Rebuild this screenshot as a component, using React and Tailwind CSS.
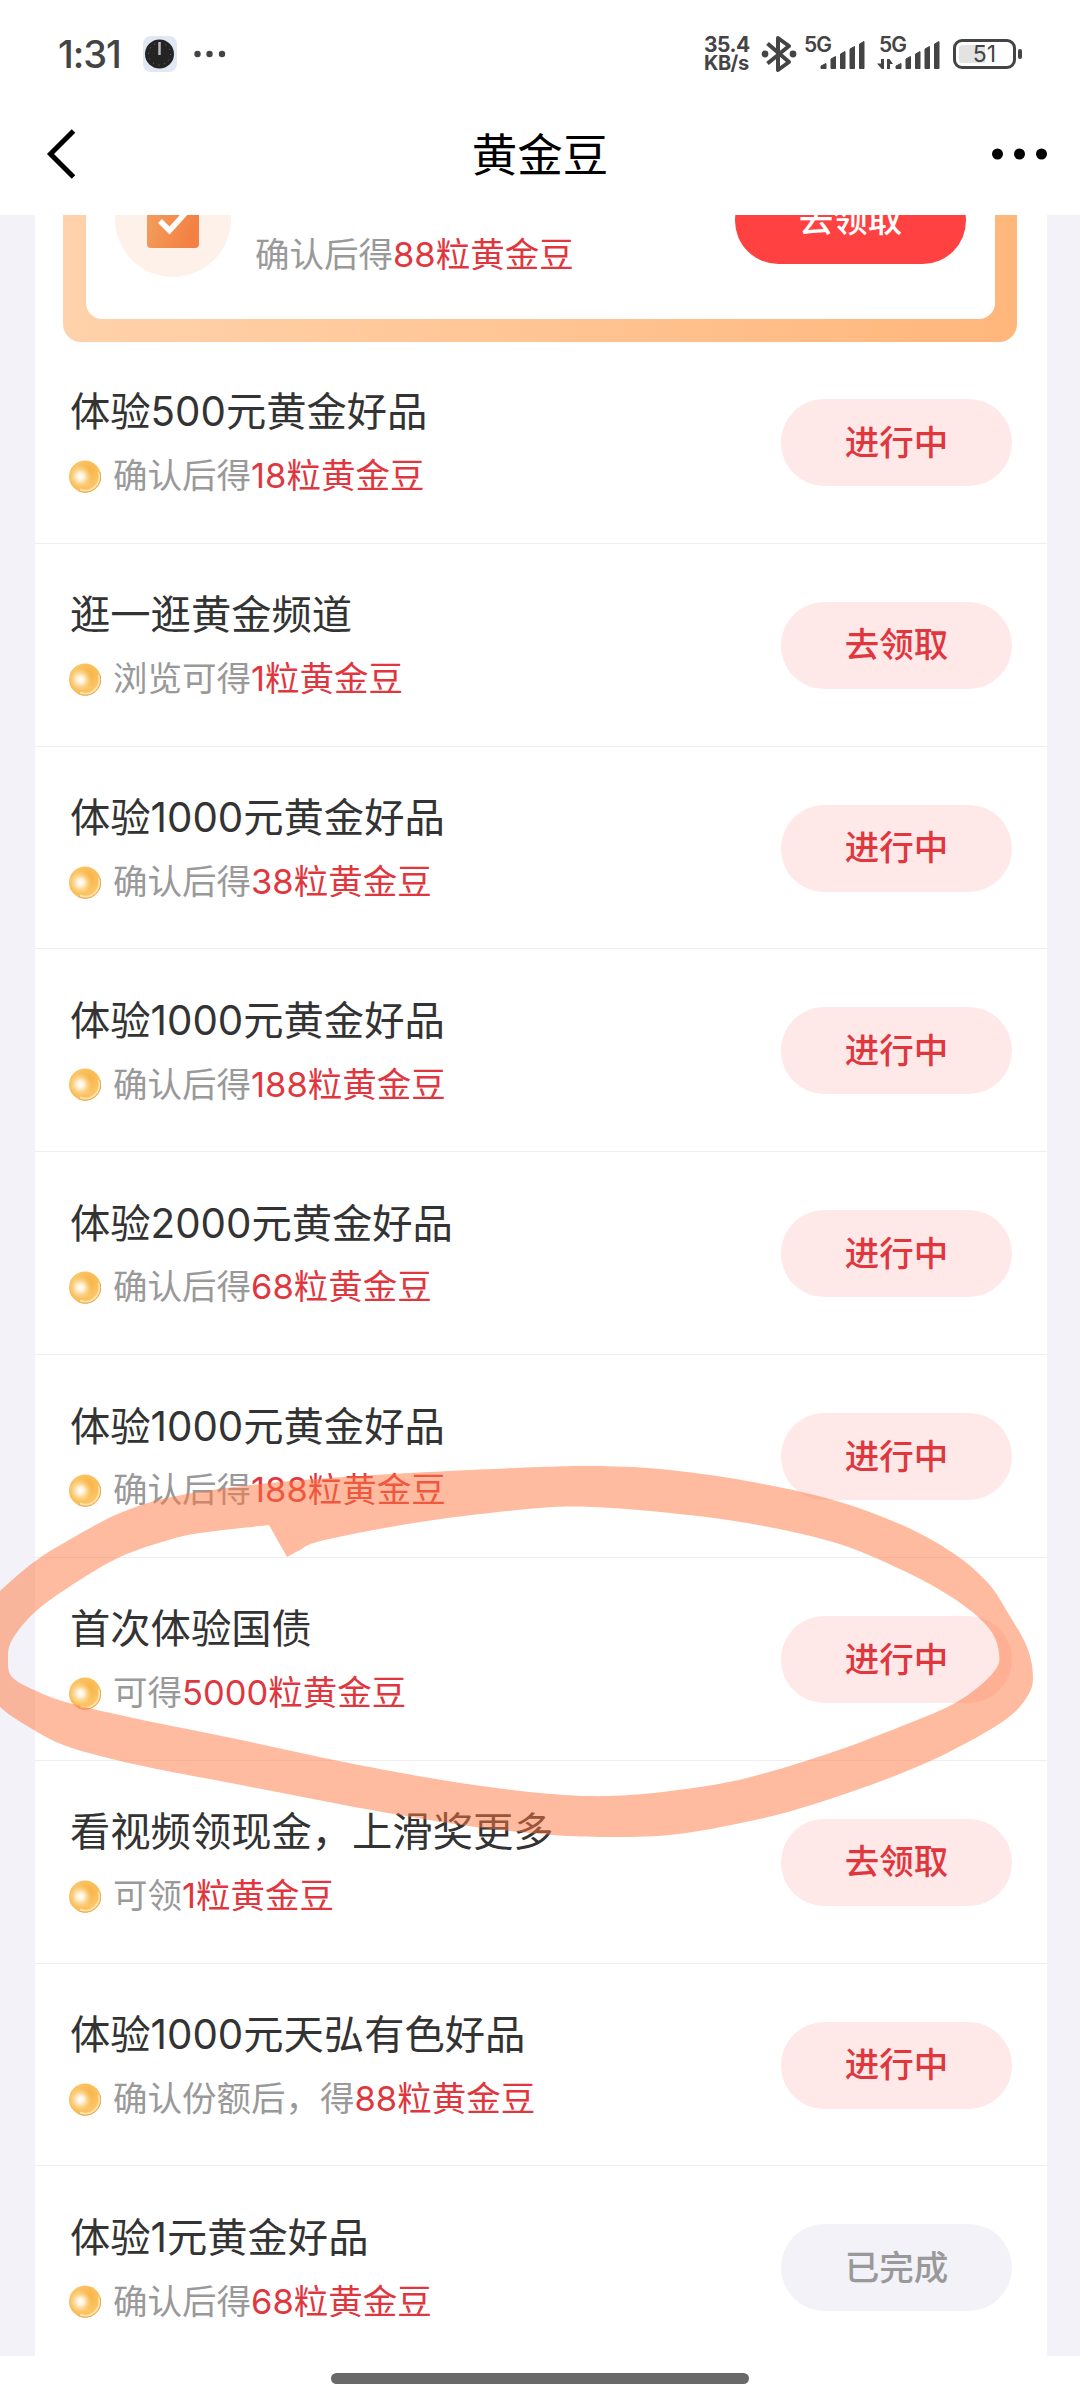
import React from 'react';

const tasks = [
  { title: '体验500元黄金好品', hint: '确认后得', reward: '18粒黄金豆', status: '进行中' },
  { title: '逛一逛黄金频道', hint: '浏览可得', reward: '1粒黄金豆', status: '去领取' },
  { title: '体验1000元黄金好品', hint: '确认后得', reward: '38粒黄金豆', status: '进行中' },
  { title: '体验1000元黄金好品', hint: '确认后得', reward: '188粒黄金豆', status: '进行中' },
  { title: '体验2000元黄金好品', hint: '确认后得', reward: '68粒黄金豆', status: '进行中' },
  { title: '体验1000元黄金好品', hint: '确认后得', reward: '188粒黄金豆', status: '进行中' },
  { title: '首次体验国债', hint: '可得', reward: '5000粒黄金豆', status: '进行中' },
  { title: '看视频领现金，上滑奖更多', hint: '可领', reward: '1粒黄金豆', status: '去领取' },
  { title: '体验1000元天弘有色好品', hint: '确认份额后，得', reward: '88粒黄金豆', status: '进行中' },
  { title: '体验1元黄金好品', hint: '确认后得', reward: '68粒黄金豆', status: '已完成' },
];

// marker stroke around the highlighted task, outer edge then inner edge
const outerEdge = [
  [-20, 1612], [0, 1591], [34, 1562], [69, 1540], [120, 1513], [172, 1497], [251, 1485],
  [344, 1477], [448, 1471], [540, 1467], [592, 1466], [660, 1469], [747, 1481], [833, 1500],
  [902, 1525], [953, 1553], [988, 1583], [1008, 1613], [1027, 1647], [1033, 1677],
  [1027, 1697], [1005, 1720], [953, 1750], [902, 1773], [833, 1798], [764, 1818],
  [678, 1834], [609, 1837], [540, 1834], [448, 1823], [344, 1805], [241, 1785],
  [138, 1765], [69, 1747], [34, 1730], [0, 1707], [-20, 1680],
];

const innerEdge = [
  [287, 1557], [300, 1550], [317, 1542], [379, 1529], [448, 1518], [540, 1508], [592, 1507],
  [660, 1512], [747, 1523], [833, 1542], [902, 1570], [953, 1598], [988, 1627], [999, 1653],
  [993, 1673], [957, 1702], [902, 1726], [833, 1752], [747, 1778], [678, 1790],
  [609, 1796], [540, 1793], [448, 1781], [344, 1762], [241, 1740], [138, 1719],
  [69, 1703], [34, 1690], [12, 1677], [8, 1660], [12, 1640], [34, 1613], [69, 1587],
  [120, 1557], [172, 1539], [207, 1532], [269, 1525],
];

function smoothPath(points) {
  let d = `M${points[0][0]} ${points[0][1]}`;
  for (let i = 0; i < points.length - 1; i++) {
    const a = points[i - 1] || points[i];
    const b = points[i];
    const c = points[i + 1];
    const e = points[i + 2] || c;
    d += ` C${b[0] + (c[0] - a[0]) / 6} ${b[1] + (c[1] - a[1]) / 6}`;
    d += ` ${c[0] - (e[0] - b[0]) / 6} ${c[1] - (e[1] - b[1]) / 6}`;
    d += ` ${c[0]} ${c[1]}`;
  }
  return d + ' Z';
}

function Signal({ data }) {
  return (
    <svg
      className="mb-[2px] overflow-visible"
      width="62"
      height="34"
      viewBox="0 0 62 34"
      fill="#444444"
      stroke="#444444"
      strokeLinejoin="round"
    >
      <text x="0" y="16" fontSize="21" fontWeight="600" textLength="28" stroke="none">
        5G
      </text>
      <path d="M17 32.500 v-2.500 l5 -2.500 v5 Z" />
      <path d="M27 32.500 v-9.500 l4.500 -2.500 v12 Z" />
      <path d="M36.500 32.500 v-14.500 l4.500 -2.500 v17 Z" />
      <path d="M46 32.500 v-19.500 l4.500 -2.500 v22 Z" />
      <path d="M55.500 32.500 v-24.500 l4.500 -2.500 v27 Z" />
      {data && (
        <path
          stroke="none"
          d="M5 23 v10 h-2.200 l-4.800 -5.500 h4 v-4.500 Z M8 33 v-10 h2.500 l3.500 5 h-3 v5 Z"
        />
      )}
    </svg>
  );
}

function StatusBar() {
  return (
    <div className="flex h-[108px] shrink-0 items-center pl-[58px] pr-[58px] text-[#444444]">
      <div className="w-[84px] text-[38px] font-medium leading-none tracking-[-1px]">1:31</div>
      <svg width="36" height="36" viewBox="0 0 36 36">
        <rect x="1" width="34" height="36" rx="8" fill="#e2e8f3" />
        <circle cx="17.500" cy="18" r="14.500" fill="#242424" />
        <circle cx="17.500" cy="18" r="11" fill="none" stroke="#777777" strokeWidth="1" strokeDasharray="1 4.760" />
        <path d="M17.500 6 v13" stroke="#bbbbbb" strokeWidth="2.500" />
      </svg>
      <svg className="ml-4" width="32" height="8" viewBox="0 0 32 8" fill="#444444">
        <circle cx="3.500" cy="4" r="3.200" />
        <circle cx="15.500" cy="4" r="3.200" />
        <circle cx="28" cy="4" r="3.200" />
      </svg>
      <div className="ml-auto w-[57px] text-[20px] font-bold leading-[19px] tracking-tight">
        <div className="text-[21px]">35.4</div>
        <div>KB/s</div>
      </div>
      <svg className="mr-[7px]" width="36" height="40" viewBox="0 0 36 40" fill="none" stroke="#444444" strokeWidth="4">
        <path d="M6.500 9.500 L28 28 L17 36 V4 L28 12 L6.500 29.500" strokeLinejoin="round" />
        <circle cx="4" cy="20" r="3.400" fill="#444444" stroke="none" />
        <circle cx="32" cy="20" r="3.400" fill="#444444" stroke="none" />
      </svg>
      <Signal />
      <div className="ml-[13px] flex">
        <Signal data />
      </div>
      <div className="ml-3 flex items-center">
        <div className="flex h-[30px] w-[63px] items-center justify-center rounded-[9px] border-3 border-[#444444] p-[3px]">
          <div className="flex h-full w-full items-center justify-center rounded-[3px] bg-linear-to-r from-[#e3e3e3] from-50% to-white to-50% text-[23px] leading-none">
            51
          </div>
        </div>
        <div className="ml-[2px] h-[10px] w-1 rounded-sm bg-[#444444]" />
      </div>
    </div>
  );
}

function NavBar() {
  return (
    <div className="flex h-[107px] shrink-0 items-center justify-between pl-[46px] pr-[32px] pb-[15px]">
      <svg width="32" height="50" viewBox="0 0 32 50" fill="none" stroke="#000000" strokeWidth="5">
        <path d="M27.500 2 L4.500 25 L27.500 48" />
      </svg>
      <h1 className="pl-[11px] pt-[3px] text-[45.5px] leading-none text-black">黄金豆</h1>
      <svg width="57" height="12" viewBox="0 0 57 12">
        <circle cx="6.500" cy="6" r="5.500" />
        <circle cx="28.500" cy="6" r="5.500" />
        <circle cx="50.500" cy="6" r="5.500" />
      </svg>
    </div>
  );
}

function Coin() {
  return (
    <svg width="32" height="33" viewBox="0 0 32 33">
      <defs>
        <radialGradient id="coinBase" cx="0.6" cy="0.35" r="0.7">
          <stop offset="0" stopColor="#f8b244" />
          <stop offset="0.6" stopColor="#fbc566" />
          <stop offset="1" stopColor="#f8bb58" />
        </radialGradient>
        <radialGradient id="coinShine" cx="0.36" cy="0.5" r="0.36">
          <stop offset="0" stopColor="#ffffff" />
          <stop offset="0.3" stopColor="#fff3dc" />
          <stop offset="1" stopColor="#fdd68c" stopOpacity="0" />
        </radialGradient>
      </defs>
      <circle cx="16" cy="16.500" r="16" fill="url(#coinBase)" />
      <circle cx="16" cy="16.500" r="16" fill="url(#coinShine)" />
      <path d="M29.500 12 A14 14 0 0 1 11 29.500" fill="none" stroke="#fee2a8" strokeWidth="2" />
      <path d="M31 12 A15.500 15.500 0 0 1 9 30.500" fill="none" stroke="#e9a954" strokeWidth="1" />
    </svg>
  );
}

function FeaturedCard() {
  return (
    <div className="-mt-[94px] ml-7 mr-[30px] h-[221px] shrink-0 rounded-[18px] bg-linear-to-r from-[#ffd2ab] to-[#ffb67b] pl-[23px] pr-[22px] pt-[23px] pb-[23px]">
      <div className="flex h-full items-center rounded-2xl bg-white pb-[26px] pl-[29px] pr-[29px]">
        <svg width="116" height="116" viewBox="0 0 116 116">
          <defs>
            <linearGradient id="box" x1="0" y1="0" x2="1" y2="0.3">
              <stop offset="0" stopColor="#f3a05f" />
              <stop offset="1" stopColor="#f38143" />
            </linearGradient>
          </defs>
          <circle cx="58" cy="58" r="58" fill="#fdf1ea" />
          <rect x="32" y="35" width="52" height="52" rx="4" fill="url(#box)" />
          <path d="M45 60 L54.500 69.500 L74 48" fill="none" stroke="#ffffff" strokeWidth="5.500" />
        </svg>
        <div className="ml-6 pt-[73px] text-[34.5px] leading-none text-[#999999]">
          确认后得<span className="text-[#e0373f]">88粒黄金豆</span>
        </div>
        <div className="mt-[3px] ml-auto flex h-[87px] w-[231px] items-center justify-center rounded-full bg-[#ff4142] text-[34.5px] font-medium text-white">
          去领取
        </div>
      </div>
    </div>
  );
}

function TaskRow({ task }) {
  const done = task.status === '已完成';
  return (
    <div className="flex h-[202.83px] shrink-0 items-center justify-between border-b border-[#eeeeef] pl-[34px] pr-[35px]">
      <div className="pt-[9px]">
        <div className="pl-px text-[40.3px] leading-[60px] text-[#333333]">{task.title}</div>
        <div className="flex h-[68px] items-center">
          <Coin />
          <div className="ml-[12px] text-[34.5px] leading-none text-[#999999]">
            {task.hint}
            <span className="text-[#e0373f]">{task.reward}</span>
          </div>
        </div>
      </div>
      <div
        className={`mt-px flex h-[87px] w-[231px] items-center justify-center rounded-full text-[34.5px] font-medium ${
          done ? 'bg-[#f3f2f8] text-[#999999]' : 'bg-[#fee8e8] text-[#e0373f]'
        }`}
      >
        {task.status}
      </div>
    </div>
  );
}

export default function App() {
  return (
    <div className="relative flex h-[2400px] w-[1080px] flex-col overflow-hidden bg-white font-['Inter','Noto_Sans_CJK_SC',sans-serif]">
      <StatusBar />
      <NavBar />
      <div className="h-[2141px] shrink-0 overflow-hidden bg-[#f3f2f8] pl-[35px] pr-[33px]">
        <div className="flex h-full flex-col overflow-hidden bg-white">
          <FeaturedCard />
          <div className="-mt-px flex flex-col">
            {tasks.map((task, i) => (
              <TaskRow key={i} task={task} />
            ))}
          </div>
        </div>
      </div>
      <div className="flex grow items-center justify-center">
        <div className="h-[11px] w-[418px] rounded-full bg-[#696969]" />
      </div>

      <svg className="pointer-events-none absolute inset-0" width="1080" height="2400" viewBox="0 0 1080 2400">
        <path
          d={`${smoothPath(outerEdge)} ${smoothPath(innerEdge)}`}
          fill="#ff7740"
          fillOpacity="0.5"
          fillRule="evenodd"
        />
      </svg>
    </div>
  );
}
